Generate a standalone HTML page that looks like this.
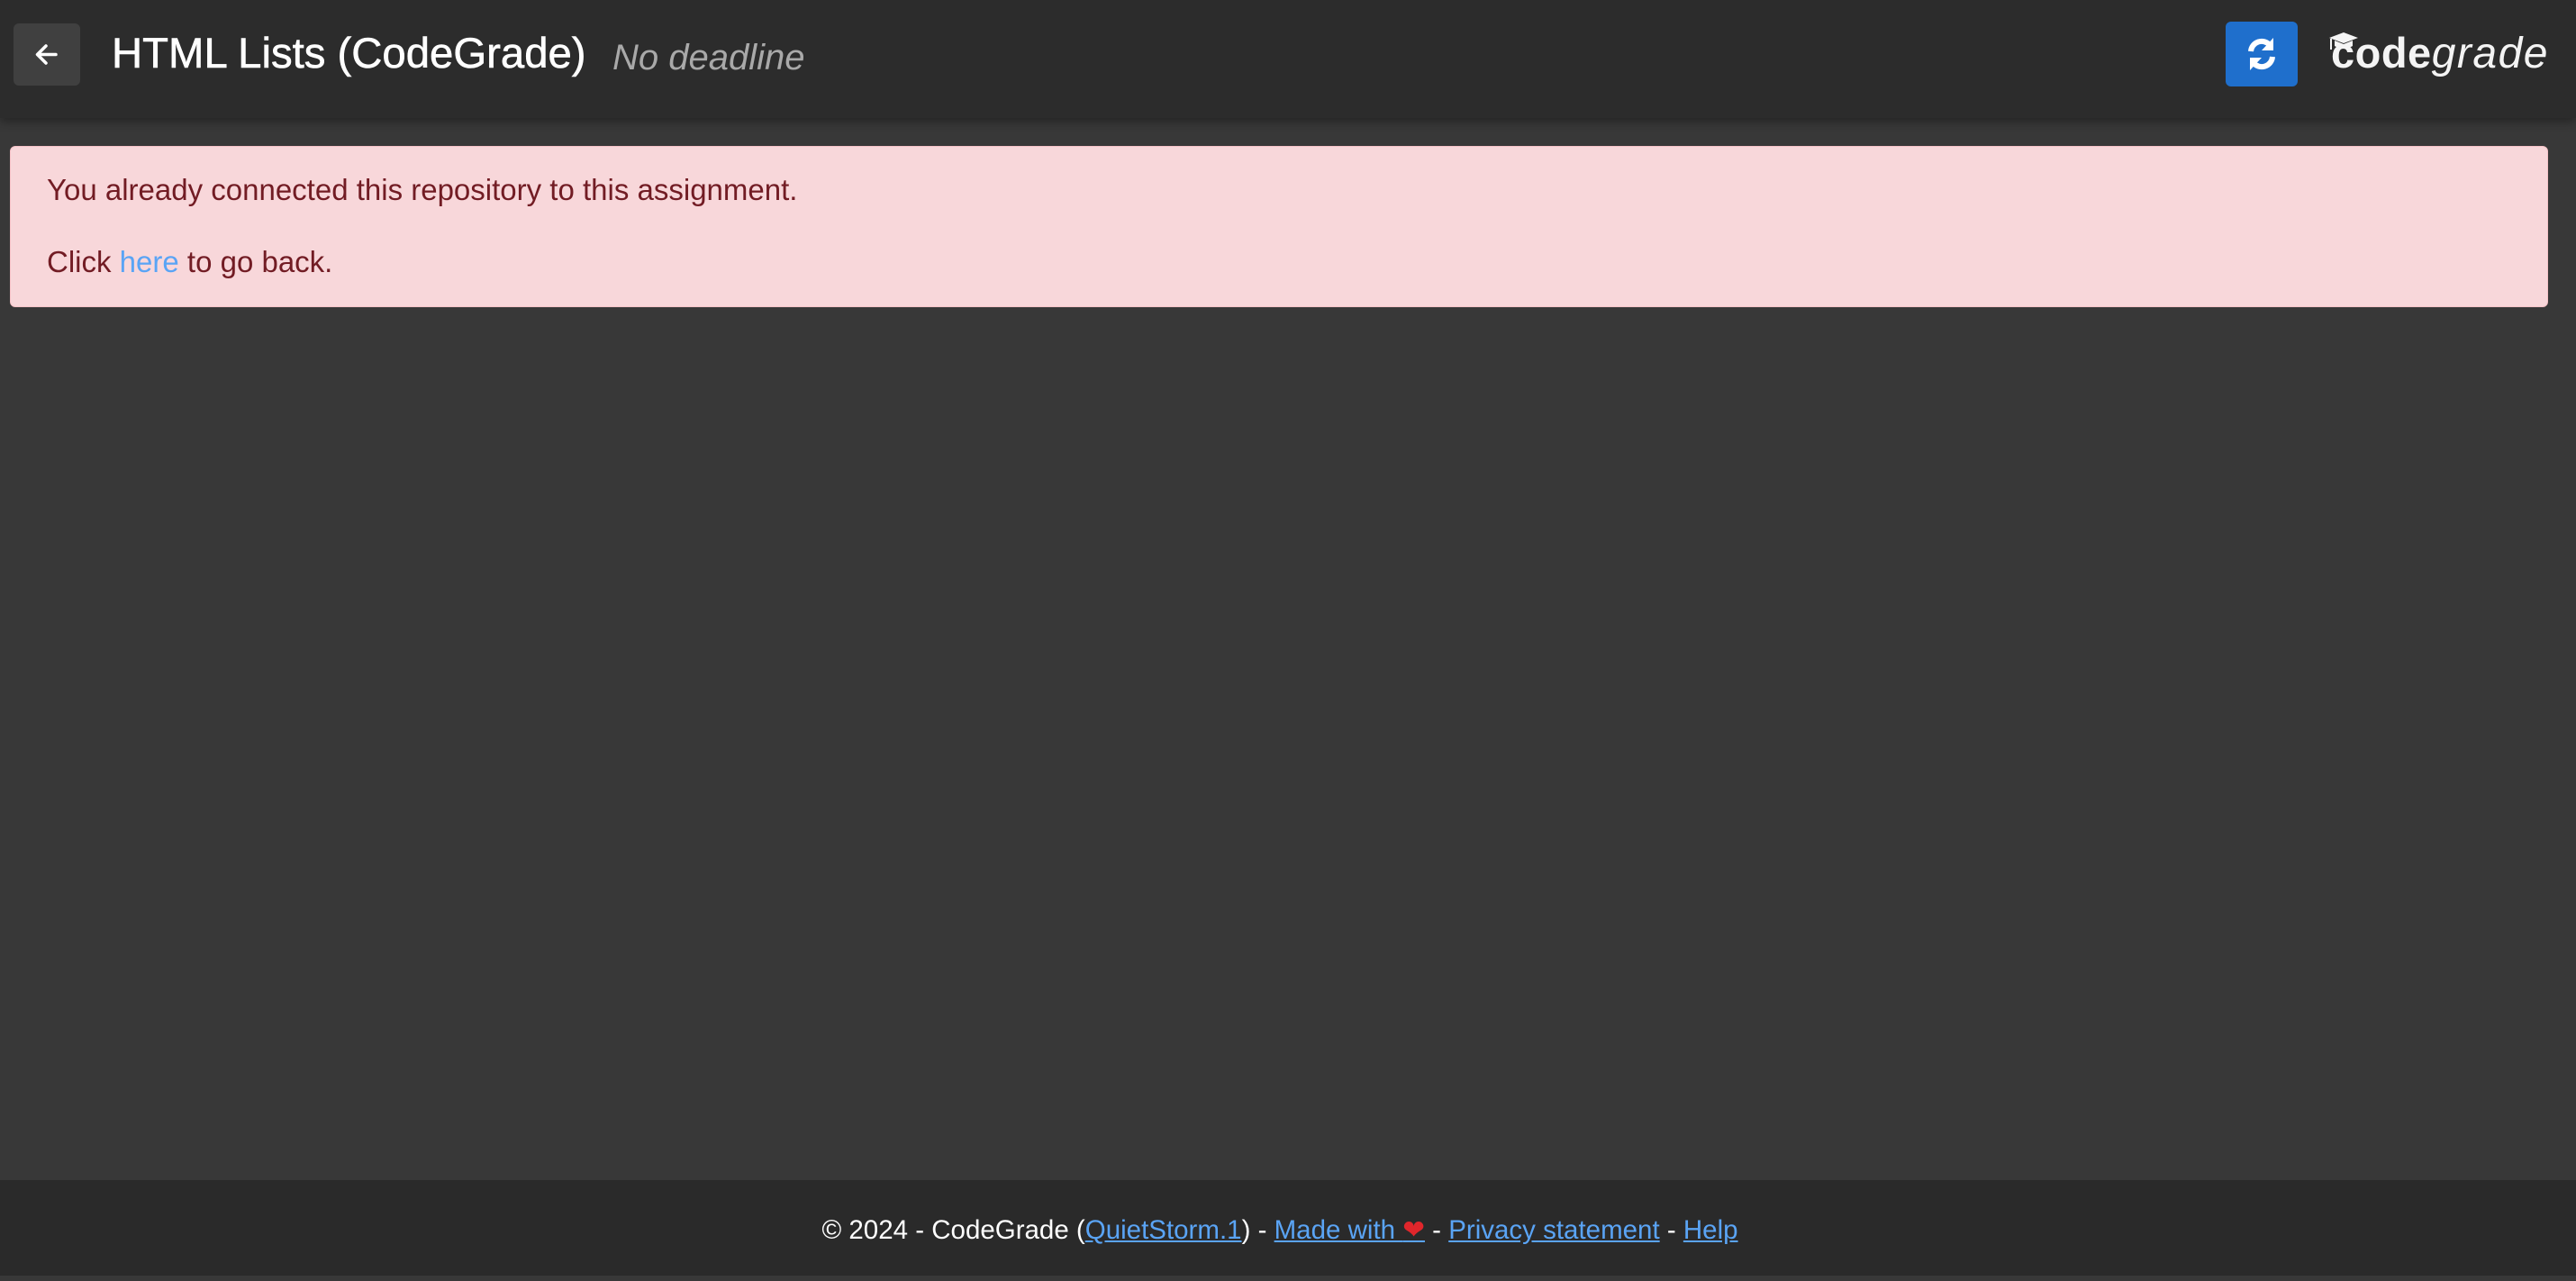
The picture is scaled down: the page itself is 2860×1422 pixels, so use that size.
<!DOCTYPE html>
<html><head><meta charset="utf-8"><style>
html,body{margin:0;padding:0;}
body{width:2860px;height:1416px;background:#383838;font-family:"Liberation Sans",sans-serif;position:relative;overflow:hidden;}
.hdr{position:absolute;left:0;top:0;width:2860px;height:131px;background:#2c2c2c;box-shadow:0 4px 10px rgba(0,0,0,.35);}
.back{position:absolute;left:15px;top:26px;width:74px;height:69px;background:#404040;border-radius:6px;}
.title{position:absolute;left:124px;top:30px;font-size:47.3px;color:#fff;line-height:60px;white-space:nowrap;-webkit-text-stroke:0.6px #fff;}
.dl{position:absolute;left:680px;top:34px;font-size:40px;color:#a9a9a9;font-style:italic;line-height:60px;white-space:nowrap;}
.ref{position:absolute;left:2471px;top:24px;width:80px;height:72px;background:#1f6fcc;border-radius:6px;}
.logo{position:absolute;left:2588px;top:24px;color:#f4f4f4;white-space:nowrap;line-height:70px;}
.alert{position:absolute;left:11px;top:162px;width:2816px;height:177px;background:#f8d7da;border:1px solid #f5c2c7;border-radius:6px;color:#721c24;font-size:33px;}
.alert p{position:absolute;left:40px;margin:0;white-space:nowrap;}
.foot{position:absolute;left:-9px;top:1310px;width:2860px;height:106px;background:#2a2a2a;color:#fff;font-size:29.5px;text-align:center;line-height:112px;}
.footbg{position:absolute;left:0;top:1310px;width:2860px;height:106px;background:#2a2a2a;}
a{color:#5aa4f5;}
</style></head><body>
<div class="hdr">
 <div class="back"><svg width="74" height="69" viewBox="0 0 74 69"><path d="M47 34.5H27M36 25L26.5 34.5 36 44" stroke="#fff" stroke-width="3.5" fill="none" stroke-linecap="round" stroke-linejoin="round"/></svg></div>
 <div class="title">HTML Lists (CodeGrade)</div>
 <div class="dl">No deadline</div>
 <div class="ref"><svg width="80" height="72" viewBox="0 0 80 72"><path d="M28 33a12 12 0 0 1 21-7" stroke="#fff" stroke-width="6" fill="none"/><path d="M53 18v14H40z" fill="#fff"/><path d="M52 39a12 12 0 0 1-21 7" stroke="#fff" stroke-width="6" fill="none"/><path d="M27 54V40h13z" fill="#fff"/></svg></div>
 <div class="logo"><svg width="36" height="30" viewBox="0 0 36 30" style="position:absolute;left:-4px;top:10px"><path d="M2 8L18 2 34 8 18 14z" fill="#f4f4f4"/><path d="M8 11v6c4 3 16 3 20 0v-6l-10 4z" fill="#f4f4f4"/><path d="M4 9v12" stroke="#f4f4f4" stroke-width="2"/></svg><span style="font-size:47px;font-weight:bold;letter-spacing:0.5px;">code</span><span style="font-size:48px;font-style:italic;letter-spacing:1.5px;">grade</span></div>
</div>
<div class="alert">
 <p style="top:29px">You already connected this repository to this assignment.</p>
 <p style="top:109px">Click <a style="text-decoration:none">here</a> to go back.</p>
</div>
<div class="footbg"></div>
<div class="foot">© 2024 - CodeGrade (<a style="text-decoration:underline">QuietStorm.1</a>) - <a style="text-decoration:underline">Made with <span style="color:#e0262b">❤</span></a> - <a style="text-decoration:underline">Privacy statement</a> - <a style="text-decoration:underline">Help</a></div>
</body></html>
